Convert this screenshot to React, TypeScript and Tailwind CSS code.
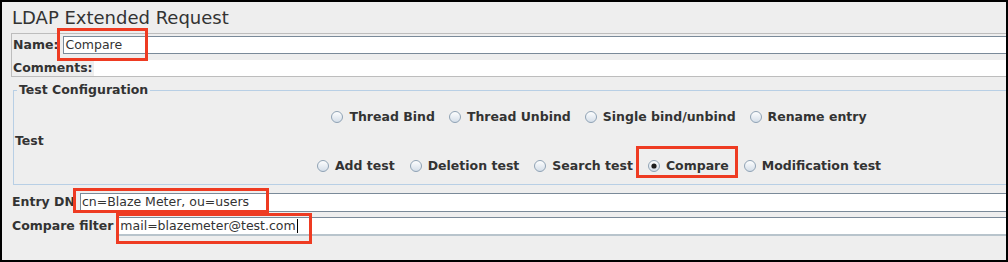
import React, { useId } from "react";

function Radio({ checked }: { checked?: boolean }) {
  const id = useId();
  return (
    <svg width="12" height="12" viewBox="0 0 12 12" className="shrink-0">
      <defs>
        <linearGradient id={id} x1="0" y1="0" x2="0" y2="1">
          <stop offset="0" stopColor="#ffffff" />
          <stop offset="1" stopColor="#d3dde8" />
        </linearGradient>
      </defs>
      <circle cx="6" cy="6" r="5.5" fill={`url(#${id})`} stroke="#8fa2b4" strokeWidth="1" />
      {checked && <circle cx="6" cy="6" r="2.6" fill="#1e1e1e" />}
    </svg>
  );
}

function RadioItem({ label, checked }: { label: string; checked?: boolean }) {
  return (
    <div className="flex items-center gap-[6px]">
      <Radio checked={checked} />
      <span className="font-bold whitespace-nowrap">{label}</span>
    </div>
  );
}

export default function App() {
  return (
    <div className="relative w-[1008px] h-[262px] overflow-hidden border-2 border-black bg-[#eeeeee] font-['DejaVu_Sans',sans-serif] text-[12.5px] text-[#333333]">
      <div className="w-[1080px]">
        <div className="pl-[10px] pt-[5px] h-[31px] text-[18px] leading-[21px]">LDAP Extended Request</div>

        <div className="ml-[9px] border border-[#bdbdbd] pt-[2px] h-[44px]">
          <div className="flex items-center h-[18px] pl-[1px] gap-[5px]">
            <span className="font-bold whitespace-nowrap">Name:</span>
            <div className="flex-1 h-[18px] border-y border-l border-[#7a8a99] bg-white pl-[1px] flex items-center leading-none">
              Compare
            </div>
          </div>
          <div className="flex items-center h-[16px] mt-[6px] pl-[1px] gap-[1px]">
            <span className="font-bold whitespace-nowrap">Comments:</span>
            <div className="flex-1 h-[16px] bg-white" />
          </div>
        </div>

        <fieldset className="mt-[5px] ml-[11px] border border-[#b8cfe5]">
          <legend className="ml-[3px] px-[2px] font-bold leading-[16px]">Test Configuration</legend>
          <div className="flex items-center h-[86px]">
            <div className="w-[34px] pl-[1px] font-bold">Test</div>
            <div className="w-[1102px] h-full flex flex-col items-center pt-[9px] gap-[29px]">
              <div className="flex items-center h-[20px] gap-[14px]">
                <RadioItem label="Thread Bind" />
                <RadioItem label="Thread Unbind" />
                <RadioItem label="Single bind/unbind" />
                <RadioItem label="Rename entry" />
              </div>
              <div className="flex items-center h-[20px] gap-[15px]">
                <RadioItem label="Add test" />
                <RadioItem label="Deletion test" />
                <RadioItem label="Search test" />
                <RadioItem label="Compare" checked />
                <RadioItem label="Modification test" />
              </div>
            </div>
          </div>
        </fieldset>

        <div className="mt-[8px] pl-[10px] flex items-center gap-[5px]">
          <span className="font-bold whitespace-nowrap">Entry DN</span>
          <div className="flex-1 h-[19px] border border-[#7a8a99] bg-white pl-[1px] flex items-center leading-none">
            cn=Blaze Meter, ou=users
          </div>
        </div>
        <div className="mt-[5px] pl-[10px] flex items-center gap-[5px]">
          <span className="font-bold whitespace-nowrap">Compare filter</span>
          <div className="flex-1 h-[19px] border-t border-l border-t-[#7a8a99] border-l-[#7a8a99] border-b-2 border-b-[#b8c4cc] bg-white pl-[1px] flex items-center leading-none">
            mail=blazemeter@test.com
            <span className="inline-block w-px h-[14px] bg-black ml-px" />
          </div>
        </div>
      </div>

      <div className="absolute left-[55px] top-[26px] w-[91px] h-[33px] border-[3px] border-[#ee3b22]" />
      <div className="absolute left-[634px] top-[144px] w-[102px] h-[32px] border-[3px] border-[#ee3b22]" />
      <div className="absolute left-[71px] top-[186px] w-[196px] h-[25px] border-[3px] border-[#ee3b22]" />
      <div className="absolute left-[114px] top-[211px] w-[196px] h-[31px] border-[3px] border-[#ee3b22]" />
    </div>
  );
}
